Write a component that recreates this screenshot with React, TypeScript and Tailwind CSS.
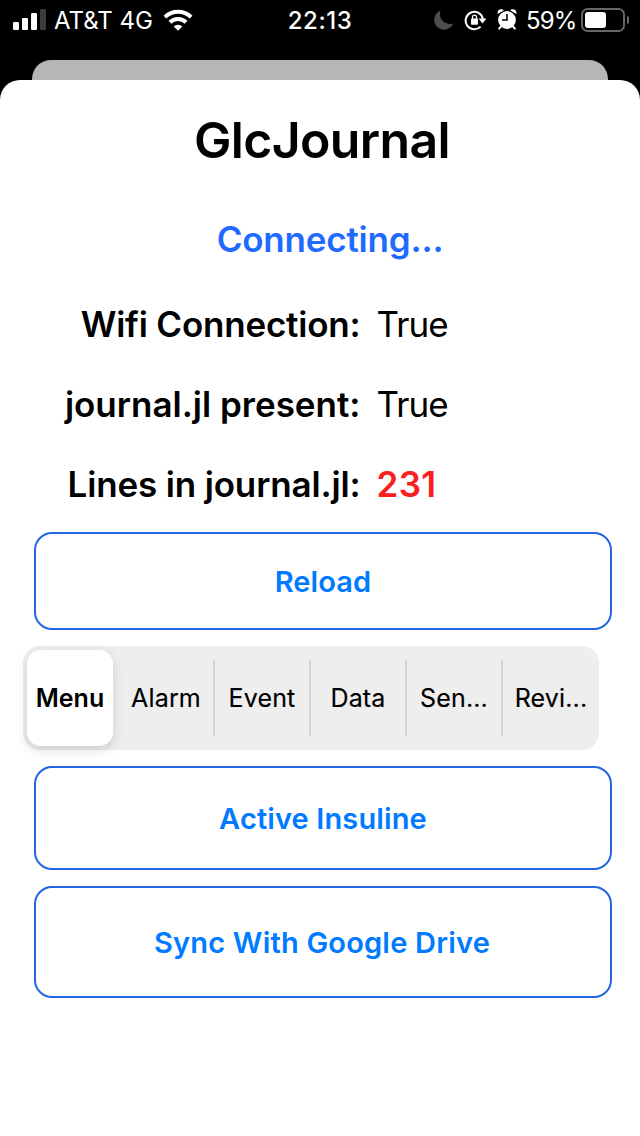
import type { ReactNode } from "react";

function SignalIcon() {
  return (
    <svg className="ml-[13px] h-[22px] w-[33px] shrink-0" viewBox="0 0 33 22" fill="#fff">
      <rect x="0" y="13" width="6" height="8" rx="1.3" />
      <rect x="9" y="9" width="6" height="12" rx="1.3" />
      <rect x="18" y="4" width="6" height="17" rx="1.3" />
      <rect x="27" y="0" width="6" height="21" rx="1.3" fill="#3b3b3b" />
    </svg>
  );
}

function WifiIcon() {
  return (
    <svg className="h-[22px] w-[30px] shrink-0" viewBox="0 0 30 22" fill="none" stroke="#fff" strokeWidth="4">
      <path d="M1.9 8.2a18.6 18.6 0 0 1 26.2 0" />
      <path d="M6.9 13.3a11.6 11.6 0 0 1 16.2 0" />
      <path d="M15 21.8l-4.3-4.2a6.1 6.1 0 0 1 8.6 0z" fill="#fff" stroke="none" />
    </svg>
  );
}

function StatusBar() {
  return (
    <div className="flex h-[60px] items-start">
      <div className="flex h-10 w-[260px] items-center">
        <SignalIcon />
        <span className="ml-[8px] w-[99px] pt-[2px] text-[24px] whitespace-nowrap text-white">AT&amp;T 4G</span>
        <div className="ml-[10px] -mt-px flex"><WifiIcon /></div>
      </div>
      <div className="flex h-10 w-[120px] items-center justify-center pt-[2px] text-[24px] font-medium tracking-[0.5px] text-white">
        <span>22:13</span>
      </div>
      <div className="flex h-10 w-[260px] items-center">
        <svg className="ml-[53px] h-[22px] w-[22px] shrink-0" viewBox="0 0 22 22" fill="#4d4d4d">
          <path d="M7.6 1.5A9.9 9.9 0 1 0 20.3 14.4A10 10 0 0 1 7.6 1.5z" />
        </svg>
        <svg className="ml-[9px] h-[22px] w-[23px] shrink-0" viewBox="0 0 23 22" fill="none" stroke="#fff" strokeWidth="2">
          <path d="M16.6 17.6A8.7 8.7 0 1 1 18.9 10" />
          <path d="M14.6 9.6h7.8l-3.9 5z" fill="#fff" stroke="none" />
          <rect x="7" y="9.6" width="7" height="6.2" rx="0.8" fill="#fff" stroke="none" />
          <path d="M8.5 10V8.1a2 2 0 0 1 4 0V10" strokeWidth="1.3" />
        </svg>
        <svg className="ml-[10px] h-[22px] w-[20px] shrink-0" viewBox="0 0 20 22" fill="#fff">
          <circle cx="10" cy="11" r="8.9" />
          <path d="M0.8 5C0 2.6 1.4 0.3 4 0.2c1.4 0 2.4 0.4 3.2 1.1zM19.2 5c0.8-2.4-0.6-4.7-3.2-4.8-1.4 0-2.4 0.4-3.2 1.1z" />
          <path d="M1 5.9L7.8 1.2M19 5.9L12.2 1.2" stroke="#000" strokeWidth="0.7" />
          <path d="M4 17.4l-1.8 2.2M16 17.4l1.8 2.2" stroke="#fff" strokeWidth="2" strokeLinecap="round" />
          <path d="M10 5v6H5" fill="none" stroke="#000" strokeWidth="1.5" />
        </svg>
        <span className="ml-[9px] w-[49px] pt-[2px] text-[24px] tracking-[-0.8px] whitespace-nowrap text-white">59%</span>
        <div className="ml-[6px] flex h-[24px] w-[44px] shrink-0 rounded-[6.5px] border-2 border-[#666] p-[2px]">
          <div className="h-full w-[21px] rounded-[3px] bg-white" />
        </div>
        <div className="ml-[2px] h-[8px] w-[2px] rounded-r-full bg-[#666]" />
      </div>
    </div>
  );
}

function InfoRow({ label, spacing = "", children }: { label: string; spacing?: string; children: ReactNode }) {
  return (
    <div className="flex h-20 items-center text-[35px]">
      <div className={`w-[360.5px] text-right font-semibold whitespace-nowrap ${spacing}`}>{label}</div>
      <div className="ml-4">{children}</div>
    </div>
  );
}

const labels = ["Menu", "Alarm", "Event", "Data", "Sen...", "Revi..."];

function Segments() {
  return (
    <div className="mt-4 ml-[23px] flex h-[104px] w-[576px] rounded-[17px] bg-[#eee] text-[25px]">
      {labels.map((label, i) => (
        <div key={label} className="flex w-24 items-center">
          {i === 0 ? (
            <div className="ml-1 flex h-24 w-[86px] items-center justify-center rounded-[14px] bg-white pt-[2px] font-semibold shadow-[0_4px_12px_rgba(0,0,0,0.14)]">
              {label}
            </div>
          ) : (
            <div className="flex-1 pt-[2px] text-center tracking-[0.15px] [-webkit-text-stroke:0.15px_#000]">{label}</div>
          )}
          {i > 0 && i < 5 && <div className="h-[76px] w-[2px] bg-[#d5d5d6]" />}
        </div>
      ))}
    </div>
  );
}

function OutlineButton({ className, children }: { className: string; children: ReactNode }) {
  return (
    <button
      className={`ml-[34px] flex w-[578px] items-center justify-center rounded-[18px] border-2 border-[#2365e0] pt-[2px] text-[29px] font-semibold text-[#007aff] ${className}`}
    >
      {children}
    </button>
  );
}

export default function App() {
  return (
    <div className="h-[1136px] w-[640px] overflow-hidden bg-black font-['Inter',sans-serif] text-black">
      <StatusBar />
      <div className="mx-8 h-5 rounded-t-[19px] bg-[#b6b6b6]" />
      <div className="flex h-[1056px] flex-col rounded-t-[20px] bg-white">
        <h1 className="flex h-[120px] items-center justify-center pl-[4px] text-[50px] font-semibold tracking-[-0.65px]">
          <span>GlcJournal</span>
        </h1>
        <div className="flex h-[84px] items-start justify-center pt-[18px] pl-[20px] text-[35px] leading-[42px] font-semibold tracking-[-0.2px] text-[#1f6bff]">
          <span>Connecting...</span>
        </div>
        <InfoRow label="Wifi Connection:" spacing="tracking-[-0.2px]">
          <span className="tracking-[-0.9px]">True</span>
        </InfoRow>
        <InfoRow label="journal.jl present:">
          <span className="tracking-[-0.9px]">True</span>
        </InfoRow>
        <InfoRow label="Lines in journal.jl:" spacing="tracking-[-0.15px]">
          <span className="font-semibold tracking-[0.4px] text-[#f9201f]">231</span>
        </InfoRow>
        <OutlineButton className="mt-[8px] h-[98px]"><span className="tracking-[0.1px]">Reload</span></OutlineButton>
        <Segments />
        <OutlineButton className="mt-4 h-[104px]"><span className="tracking-[0.13px]">Active Insuline</span></OutlineButton>
        <OutlineButton className="mt-4 h-[112px] pr-[2px]"><span className="tracking-[0.2px]">Sync With Google Drive</span></OutlineButton>
      </div>
    </div>
  );
}
